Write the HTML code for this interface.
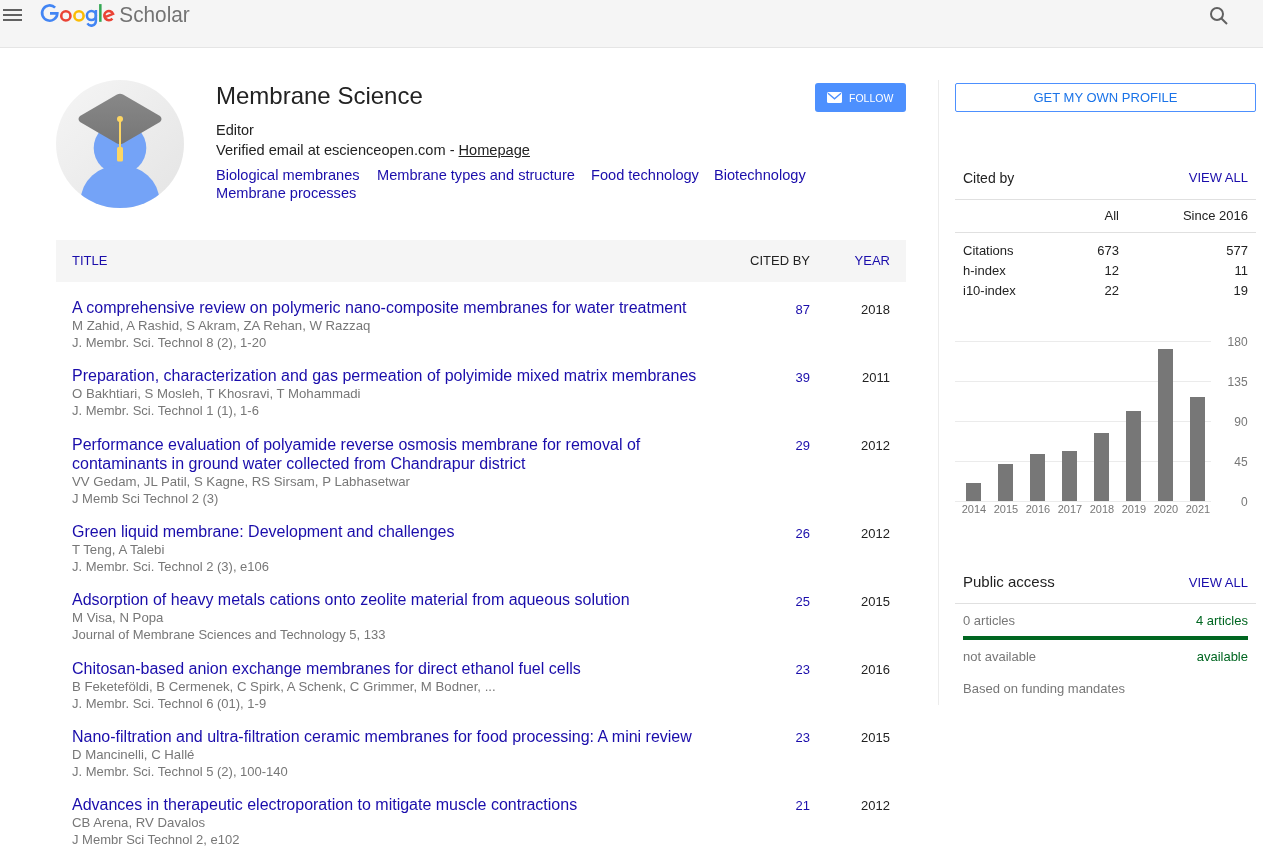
<!DOCTYPE html>
<html><head><meta charset="utf-8">
<style>
*{box-sizing:border-box}
html,body{margin:0;padding:0;background:#fff;width:1263px;height:855px;overflow:hidden}
body{font-family:"Liberation Sans",sans-serif;font-size:13px;color:#222;position:relative;will-change:transform}
.abs{position:absolute;white-space:nowrap}
a{color:#1a0dab;text-decoration:none}
#hdr{position:absolute;left:0;top:0;width:1263px;height:47px;background:#f5f5f5;border-bottom:1px solid #e5e5e5;box-sizing:content-box}
.gray{color:#777}
.t{position:absolute;left:72px;font-size:16px;line-height:19px;color:#1a0dab;white-space:nowrap}
.au{position:absolute;left:72px;font-size:13px;line-height:17px;color:#777;white-space:nowrap}
.nm{font-size:13.2px}
.cn{position:absolute;right:453px;font-size:13px;line-height:17px;color:#1a0dab}
.yr{position:absolute;right:373px;font-size:13px;line-height:17px;color:#222}
</style></head><body>
<div id="hdr"></div>
<!-- hamburger -->
<div class="abs" style="left:3px;top:9px;width:19px;height:2px;background:#616161"></div>
<div class="abs" style="left:3px;top:14px;width:19px;height:2px;background:#616161"></div>
<div class="abs" style="left:3px;top:19px;width:19px;height:2px;background:#616161"></div>
<!-- logo -->
<svg class="abs" style="left:0;top:0" width="200" height="32" viewBox="0 0 200 32">
<path d="M55.1,7.6 A7.65,7.65 0 1 0 57.34,13.4 H50" fill="none" stroke="#4285f4" stroke-width="2.6"/>
<circle cx="65.85" cy="15.9" r="4.6" fill="none" stroke="#ea4335" stroke-width="2.6"/>
<circle cx="79" cy="15.9" r="4.6" fill="none" stroke="#fbbc05" stroke-width="2.6"/>
<circle cx="91.4" cy="15.6" r="4.5" fill="none" stroke="#4285f4" stroke-width="2.5"/>
<path d="M95.9,10 V21.2 A4.6,4.6 0 0 1 87.4,23.4" fill="none" stroke="#4285f4" stroke-width="2.5"/>
<rect x="99.1" y="4.1" width="2.5" height="17.7" fill="#34a853"/>
<path d="M104.4,17.3 L113.1,13.9 A4.6,4.6 0 1 0 112.4,18.6" fill="none" stroke="#ea4335" stroke-width="2.5"/>
<text x="119.3" y="21.8" font-family="Liberation Sans" font-size="22.5" textLength="70.5" lengthAdjust="spacingAndGlyphs" fill="#737373">Scholar</text>
</svg>
<!-- search icon -->
<svg class="abs" style="left:1207px;top:4px" width="24" height="24" viewBox="0 0 24 24"><circle cx="10" cy="10" r="6" fill="none" stroke="#616161" stroke-width="2"/><line x1="14.2" y1="14.2" x2="20" y2="20" stroke="#616161" stroke-width="2"/></svg>

<!-- avatar -->
<svg class="abs" style="left:56px;top:80px" width="128" height="128" viewBox="0 0 128 128">
<defs><linearGradient id="bg" x1="0" y1="0" x2="1" y2="1"><stop offset="0" stop-color="#f5f5f5"/><stop offset="1" stop-color="#e4e4e4"/></linearGradient>
<clipPath id="cc"><circle cx="64" cy="64" r="64"/></clipPath></defs>
<circle cx="64" cy="64" r="64" fill="url(#bg)"/>
<g clip-path="url(#cc)">
<circle cx="64" cy="68" r="26.3" fill="#74a3f7"/>
<ellipse cx="64" cy="120.5" rx="39.3" ry="35.5" fill="#74a3f7"/>
</g>
<linearGradient id="capg" x1="0" y1="0" x2="0" y2="1"><stop offset="0" stop-color="#888"/><stop offset="1" stop-color="#767676"/></linearGradient>
<path d="M61 14.5 Q64 13 67 14.5 L104 36 Q107 39 104 42 L67 63.5 Q64 65 61 63.5 L24 42 Q21 39 24 36 Z" fill="url(#capg)"/>
<circle cx="64" cy="39" r="3" fill="#fdd663"/>
<rect x="63" y="39" width="2" height="30" fill="#fdd663"/>
<rect x="61" y="67" width="6" height="14.5" rx="1.5" fill="#fdd663"/>
</svg>

<div class="abs" style="left:216px;top:81px;font-size:24px;line-height:30px;color:#222">Membrane Science</div>
<div class="abs" style="left:216px;top:120px;font-size:14.5px;line-height:20px;color:#222">Editor</div>
<div class="abs" style="left:216px;top:140px;font-size:14.6px;line-height:20px;color:#222">Verified email at escienceopen.com - <span style="text-decoration:underline">Homepage</span></div>
<div class="abs" style="left:216px;top:166px;font-size:14.6px;line-height:18px;color:#1a0dab">Biological membranes</div>
<div class="abs" style="left:377px;top:166px;font-size:14.6px;line-height:18px;color:#1a0dab">Membrane types and structure</div>
<div class="abs" style="left:591px;top:166px;font-size:14.6px;line-height:18px;color:#1a0dab">Food technology</div>
<div class="abs" style="left:714px;top:166px;font-size:14.6px;line-height:18px;color:#1a0dab">Biotechnology</div>
<div class="abs" style="left:216px;top:184px;font-size:14.6px;line-height:18px;color:#1a0dab">Membrane processes</div>

<!-- follow -->
<div class="abs" style="left:815px;top:83px;width:91px;height:29px;background:#4d90fe;border-radius:3px"></div>
<svg class="abs" style="left:827px;top:92px" width="15" height="11" viewBox="0 0 15 11"><rect x="0" y="0" width="15" height="11" rx="1.5" fill="#fff"/><path d="M1 1.2 L7.5 6.8 L14 1.2" fill="none" stroke="#4d90fe" stroke-width="1.3"/></svg>
<div class="abs" style="left:849px;top:91px;font-size:10.5px;line-height:14px;color:#fff">FOLLOW</div>

<!-- table header -->
<div class="abs" style="left:56px;top:240px;width:850px;height:42px;background:#f5f5f5"></div>
<div class="abs" style="left:72px;top:252px;font-size:13px;line-height:17px;color:#1a0dab">TITLE</div>
<div class="abs" style="right:453px;top:252px;font-size:13px;line-height:17px;color:#222">CITED BY</div>
<div class="abs" style="right:373px;top:252px;font-size:13px;line-height:17px;color:#1a0dab">YEAR</div>

<!-- rows -->
<div class="t" style="top:298px">A comprehensive review on polymeric nano-composite membranes for water treatment</div>
<div class="au nm" style="top:317px">M Zahid, A Rashid, S Akram, ZA Rehan, W Razzaq</div>
<div class="au" style="top:334px">J. Membr. Sci. Technol 8 (2), 1-20</div>
<div class="cn" style="top:301px">87</div><div class="yr" style="top:301px">2018</div>

<div class="t" style="top:366px">Preparation, characterization and gas permeation of polyimide mixed matrix membranes</div>
<div class="au nm" style="top:385px">O Bakhtiari, S Mosleh, T Khosravi, T Mohammadi</div>
<div class="au" style="top:402px">J. Membr. Sci. Technol 1 (1), 1-6</div>
<div class="cn" style="top:369px">39</div><div class="yr" style="top:369px">2011</div>

<div class="t" style="top:435px">Performance evaluation of polyamide reverse osmosis membrane for removal of<br>contaminants in ground water collected from Chandrapur district</div>
<div class="au nm" style="top:473px">VV Gedam, JL Patil, S Kagne, RS Sirsam, P Labhasetwar</div>
<div class="au" style="top:490px">J Memb Sci Technol 2 (3)</div>
<div class="cn" style="top:437px">29</div><div class="yr" style="top:437px">2012</div>

<div class="t" style="top:522px">Green liquid membrane: Development and challenges</div>
<div class="au nm" style="top:541px">T Teng, A Talebi</div>
<div class="au" style="top:558px">J. Membr. Sci. Technol 2 (3), e106</div>
<div class="cn" style="top:525px">26</div><div class="yr" style="top:525px">2012</div>

<div class="t" style="top:590px">Adsorption of heavy metals cations onto zeolite material from aqueous solution</div>
<div class="au nm" style="top:609px">M Visa, N Popa</div>
<div class="au" style="top:626px">Journal of Membrane Sciences and Technology 5, 133</div>
<div class="cn" style="top:593px">25</div><div class="yr" style="top:593px">2015</div>

<div class="t" style="top:659px">Chitosan-based anion exchange membranes for direct ethanol fuel cells</div>
<div class="au nm" style="top:678px">B Feketeföldi, B Cermenek, C Spirk, A Schenk, C Grimmer, M Bodner, ...</div>
<div class="au" style="top:695px">J. Membr. Sci. Technol 6 (01), 1-9</div>
<div class="cn" style="top:661px">23</div><div class="yr" style="top:661px">2016</div>

<div class="t" style="top:727px">Nano-filtration and ultra-filtration ceramic membranes for food processing: A mini review</div>
<div class="au nm" style="top:746px">D Mancinelli, C Hallé</div>
<div class="au" style="top:763px">J. Membr. Sci. Technol 5 (2), 100-140</div>
<div class="cn" style="top:729px">23</div><div class="yr" style="top:729px">2015</div>

<div class="t" style="top:795px">Advances in therapeutic electroporation to mitigate muscle contractions</div>
<div class="au nm" style="top:814px">CB Arena, RV Davalos</div>
<div class="au" style="top:831px">J Membr Sci Technol 2, e102</div>
<div class="cn" style="top:797px">21</div><div class="yr" style="top:797px">2012</div>

<!-- sidebar -->
<div class="abs" style="left:938px;top:80px;width:1px;height:625px;background:#ececec"></div>
<div class="abs" style="left:955px;top:83px;width:301px;height:29px;border:1px solid #4d90fe;border-radius:2px;text-align:center;font-size:13px;line-height:27px;color:#1a73e8">GET MY OWN PROFILE</div>

<div class="abs" style="left:963px;top:168px;font-size:14px;line-height:20px;color:#222">Cited by</div>
<div class="abs" style="right:15px;top:168px;font-size:13px;line-height:20px;color:#1a0dab">VIEW ALL</div>
<div class="abs" style="left:955px;top:199px;width:301px;height:1px;background:#e0e0e0"></div>
<div class="abs" style="right:144px;top:207px;font-size:13px;line-height:17px">All</div>
<div class="abs" style="right:15px;top:207px;font-size:13px;line-height:17px">Since 2016</div>
<div class="abs" style="left:955px;top:232px;width:301px;height:1px;background:#e0e0e0"></div>
<div class="abs" style="left:963px;top:241px;font-size:13px;line-height:20px">Citations<br>h-index<br>i10-index</div>
<div class="abs" style="right:144px;top:241px;font-size:13px;line-height:20px;text-align:right">673<br>12<br>22</div>
<div class="abs" style="right:15px;top:241px;font-size:13px;line-height:20px;text-align:right">577<br>11<br>19</div>

<!-- chart -->
<svg class="abs" style="left:940px;top:320px" width="323" height="210" viewBox="0 0 323 210">
<g stroke="#ebebeb" stroke-width="1">
<line x1="15" y1="21.5" x2="271" y2="21.5"/><line x1="15" y1="61.5" x2="271" y2="61.5"/><line x1="15" y1="101.5" x2="271" y2="101.5"/><line x1="15" y1="141.5" x2="271" y2="141.5"/><line x1="15" y1="181.5" x2="271" y2="181.5"/>
</g>
<g fill="#777">
<rect x="26" y="163" width="15" height="18"/>
<rect x="58" y="144" width="15" height="37"/>
<rect x="90" y="134" width="15" height="47"/>
<rect x="122" y="131" width="15" height="50"/>
<rect x="154" y="113" width="15" height="68"/>
<rect x="186" y="91" width="15" height="90"/>
<rect x="218" y="29" width="15" height="152"/>
<rect x="250" y="77" width="15" height="104"/>
</g>
<g font-family="Liberation Sans" font-size="11" fill="#777" text-anchor="middle">
<text x="34.0" y="193">2014</text><text x="66.0" y="193">2015</text><text x="98.0" y="193">2016</text><text x="130.0" y="193">2017</text><text x="162.0" y="193">2018</text><text x="194.0" y="193">2019</text><text x="226.0" y="193">2020</text><text x="258.0" y="193">2021</text>
</g>
<g font-family="Liberation Sans" font-size="12" fill="#777" text-anchor="end">
<text x="307.6" y="26.4">180</text><text x="307.6" y="66.4">135</text><text x="307.6" y="106.4">90</text><text x="307.6" y="146.4">45</text><text x="307.6" y="186.4">0</text>
</g>
</svg>

<div class="abs" style="left:963px;top:572px;font-size:15px;line-height:20px;color:#222">Public access</div>
<div class="abs" style="right:15px;top:573px;font-size:13px;line-height:20px;color:#1a0dab">VIEW ALL</div>
<div class="abs" style="left:955px;top:603px;width:301px;height:1px;background:#e0e0e0"></div>
<div class="abs" style="left:963px;top:612px;font-size:13px;line-height:17px;color:#777">0 articles</div>
<div class="abs" style="right:15px;top:612px;font-size:13px;line-height:17px;color:#006621">4 articles</div>
<div class="abs" style="left:963px;top:636px;width:285px;height:4px;background:#006621"></div>
<div class="abs" style="left:963px;top:648px;font-size:13px;line-height:17px;color:#777">not available</div>
<div class="abs" style="right:15px;top:648px;font-size:13px;line-height:17px;color:#006621">available</div>
<div class="abs" style="left:963px;top:680px;font-size:13px;line-height:17px;color:#777">Based on funding mandates</div>
</body></html>
